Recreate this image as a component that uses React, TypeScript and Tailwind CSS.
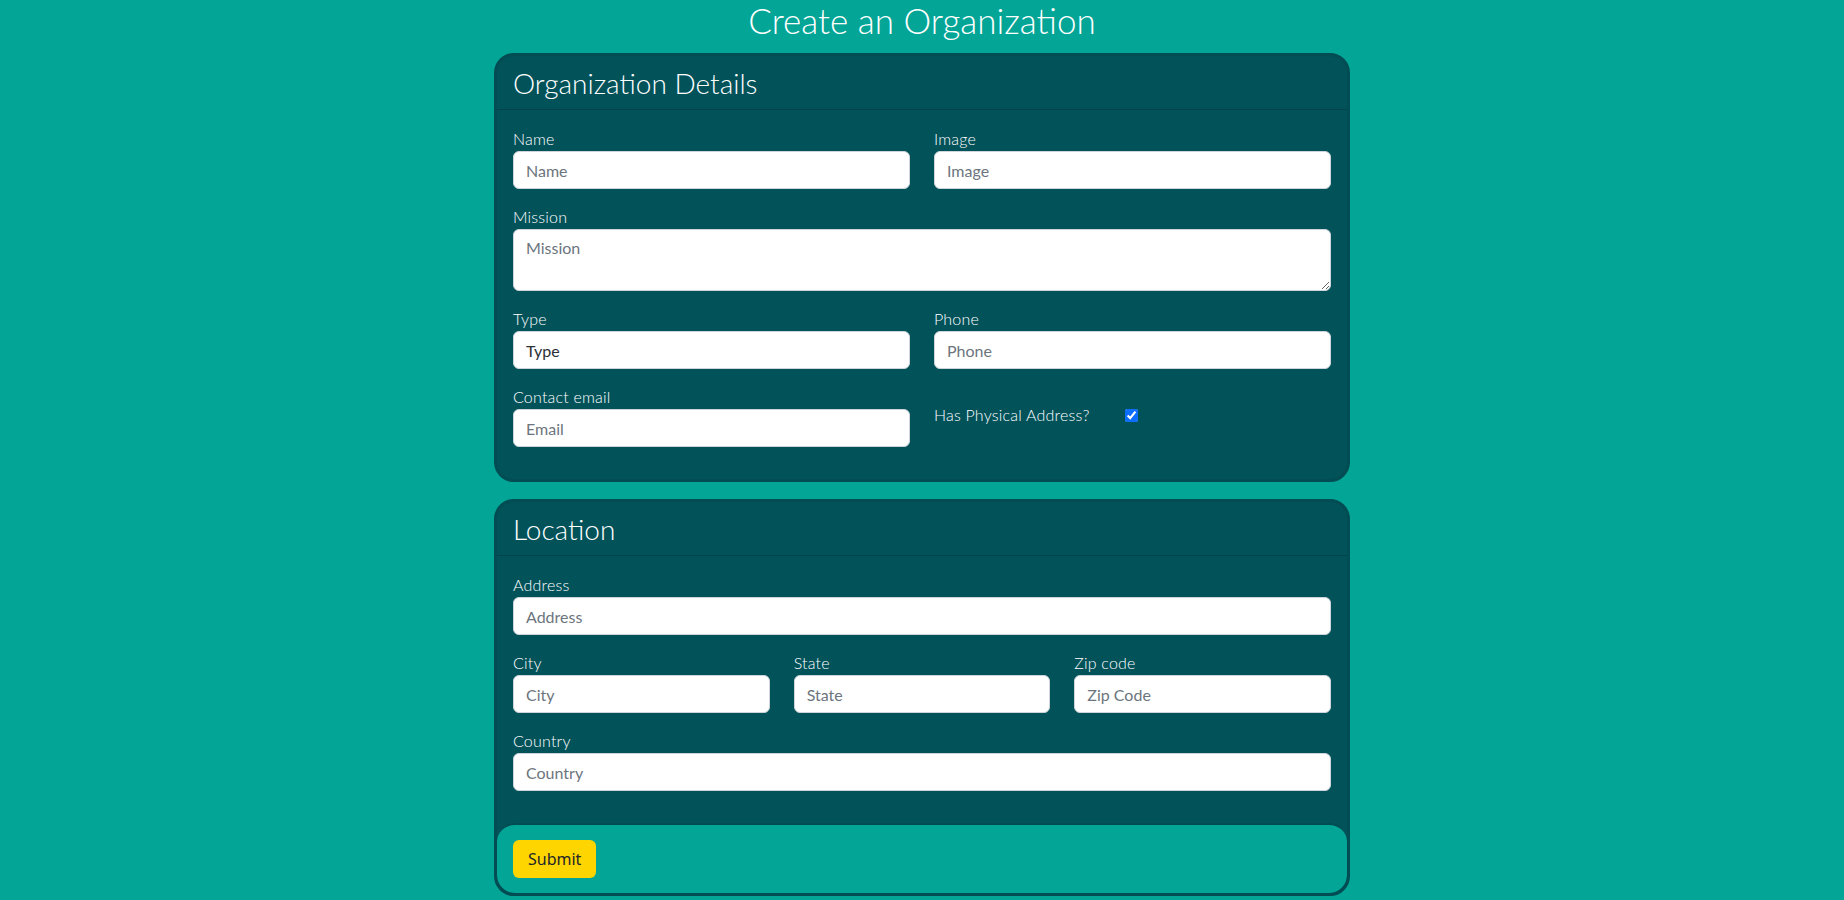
import React from "react";

const font = { fontFamily: "Lato, 'Noto Sans', sans-serif" };

function Field({ label, placeholder, value }: { label: string; placeholder: string; value?: string }) {
  return (
    <div className="mb-4 flex flex-col">
      <label className="text-base leading-6 font-light tracking-[0.2px] text-white">{label}</label>
      {value ? (
        <input
          readOnly
          value={value}
          className="h-[38px] w-full rounded-[6px] border border-[#ced4da] bg-white px-3 text-base font-normal text-[#2b3035] outline-none"
        />
      ) : (
        <input
          placeholder={placeholder}
          className="h-[38px] w-full rounded-[6px] border border-[#ced4da] bg-white px-3 text-base text-[#212529] outline-none placeholder:text-[#6c757d]"
        />
      )}
    </div>
  );
}

function CardHeader({ title }: { title: string }) {
  return (
    <div className="flex h-[54px] items-center border-b border-[#01434a] px-4">
      <h3 className="text-[28px] leading-[34px] font-light text-white">{title}</h3>
    </div>
  );
}

export default function App() {
  return (
    <div className="min-h-[900px] w-full bg-[#02a596] pb-1" style={font}>
      <h1 className="mb-[13px] text-center text-[35px] leading-[40px] font-light text-white">
        Create an Organization
      </h1>

      <div className="mx-auto mb-[17px] w-[856px] overflow-hidden rounded-[20px] border-[3px] border-[#024c53] bg-[#02525a]">
        <CardHeader title="Organization Details" />
        <div className="px-4 pt-[17px] pb-[16px]">
          <div className="grid grid-cols-2 gap-x-6">
            <Field label="Name" placeholder="Name" />
            <Field label="Image" placeholder="Image" />
          </div>
          <div className="mb-4 flex flex-col">
            <label className="text-base leading-6 font-light tracking-[0.2px] text-white">Mission</label>
            <textarea
              rows={2}
              placeholder="Mission"
              className="h-[62px] w-full rounded-[6px] border border-[#ced4da] bg-white px-3 py-[6px] text-base leading-6 text-[#212529] outline-none placeholder:text-[#6c757d]"
            />
          </div>
          <div className="grid grid-cols-2 gap-x-6">
            <Field label="Type" placeholder="Type" value="Type" />
            <Field label="Phone" placeholder="Phone" />
            <Field label="Contact email" placeholder="Email" />
            <div className="flex items-start pt-[18px]">
              <label className="text-base leading-6 font-light tracking-[0.2px] text-white">Has Physical Address?</label>
              <input
                type="checkbox"
                defaultChecked
                className="mt-[6px] ml-[35px] h-[13px] w-[13px] accent-[#0d6efd]"
              />
            </div>
          </div>
        </div>
      </div>

      <div className="mx-auto w-[856px] overflow-hidden rounded-[20px] border-[3px] border-[#024c53] bg-[#02525a]">
        <CardHeader title="Location" />
        <div className="px-4 pt-[17px] pb-[16px]">
          <Field label="Address" placeholder="Address" />
          <div className="grid grid-cols-3 gap-x-6">
            <Field label="City" placeholder="City" />
            <Field label="State" placeholder="State" />
            <Field label="Zip code" placeholder="Zip Code" />
          </div>
          <Field label="Country" placeholder="Country" />
        </div>
        <div className="rounded-[18px] border-t-2 border-[#024c53] bg-[#02a596] px-4 py-[15px]">
          <button
            className="h-[38px] rounded-[6px] bg-[#ffd500] px-[15px] text-base text-[#212529]"
            style={{ fontFamily: "'Noto Sans', 'Open Sans', sans-serif" }}
          >
            Submit
          </button>
        </div>
      </div>
    </div>
  );
}
